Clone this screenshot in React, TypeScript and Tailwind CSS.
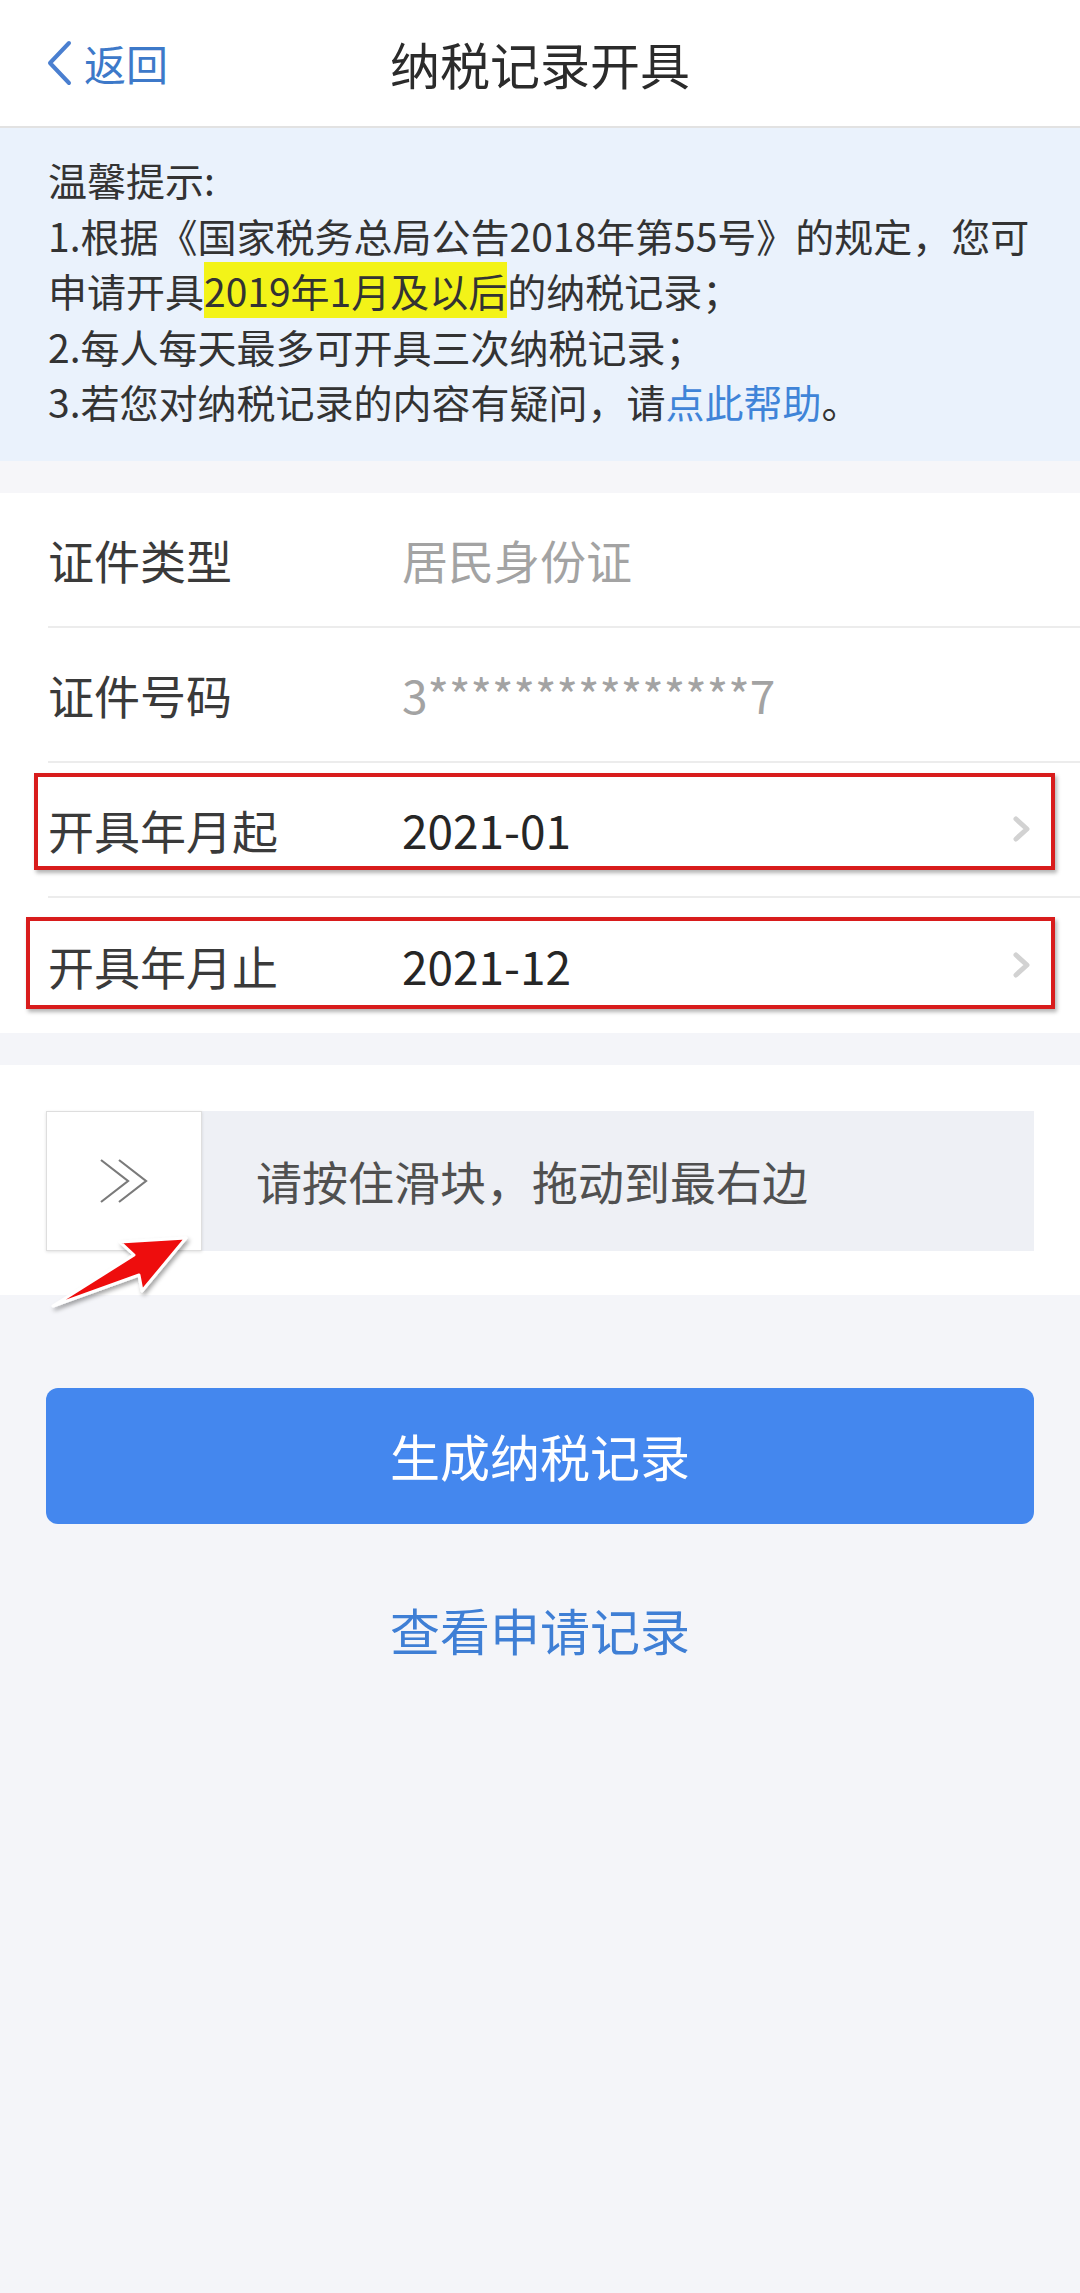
import React from "react"

const font = { fontFamily: '"Noto Sans CJK SC", "Noto Sans", sans-serif' }

function ChevronRight() {
  return (
    <svg width="20" height="26" viewBox="0 0 20 26" className="shrink-0">
      <polyline points="4,3 15,13 4,23" fill="none" stroke="#d2d2d2" strokeWidth="5" strokeLinejoin="round" strokeLinecap="round" />
    </svg>
  )
}

interface RowProps {
  label: string
  value: string
  muted?: boolean
  arrow?: boolean
  last?: boolean
  mark?: string
}

function Row({ label, value, muted, arrow, last, mark }: RowProps) {
  return (
    <div className="relative h-[135px] pl-[48px]">
      <div className={`flex h-full items-center pr-[48px] ${last ? "" : "border-b-2 border-[#ececec]"}`}>
        <div className="w-[354px] shrink-0 text-[46px] text-[#3a3a3a]">{label}</div>
        <div className={`flex-1 text-[46px] ${muted ? "text-[#a3a3a3]" : "text-[#262626]"}`}>{value}</div>
        {arrow && <ChevronRight />}
      </div>
      {/* red annotation box */}
      {mark && <div className={`pointer-events-none absolute border-[4px] border-[#d81c1c] shadow-[2px_3px_4px_rgba(0,0,0,0.3)] ${mark}`}></div>}
    </div>
  )
}

export default function App() {
  return (
    <div className="min-h-[2293px] w-[1080px] bg-[#f4f5f9]" style={font}>
      {/* Header */}
      <div className="relative flex h-[128px] items-center justify-center border-b-2 border-[#e2e2e2] bg-white">
        <div className="absolute left-[44px] top-0 flex h-full items-center gap-[10px] text-[#3d79c9]">
          <svg width="30" height="46" viewBox="0 0 30 46">
            <polyline points="25,3 6,23 25,43" fill="none" stroke="#4a7fd0" strokeWidth="4" strokeLinecap="round" strokeLinejoin="round" />
          </svg>
          <span className="text-[42px] leading-none">返回</span>
        </div>
        <h1 className="text-[50px] font-normal text-[#2b2b2b]">纳税记录开具</h1>
      </div>

      {/* Tips */}
      <div className="bg-[#eaf2fc] px-[48px] pb-[31px] pt-[24px] text-[39px] leading-[55.5px] text-[#333]">
        <p>温馨提示:</p>
        <p>
          1.根据《国家税务总局公告2018年第55号》的规定，您可申请开具
          <span className="bg-[#f3f318]">2019年1月及以后</span>
          的纳税记录；
        </p>
        <p>2.每人每天最多可开具三次纳税记录；</p>
        <p>
          3.若您对纳税记录的内容有疑问，请<span className="text-[#3f84d8]">点此帮助</span>。
        </p>
      </div>

      <div className="h-[32px] bg-[#f6f6f9]"></div>

      {/* Form */}
      <div className="bg-white">
        <Row label="证件类型" value="居民身份证" muted />
        <Row label="证件号码" value="3***************7" muted />
        <Row label="开具年月起" value="2021-01" arrow mark="left-[34px] right-[25px] top-[10px] h-[97px]" />
        <Row label="开具年月止" value="2021-12" arrow last mark="left-[26px] right-[25px] top-[19px] h-[92px]" />
      </div>

      <div className="h-[32px] bg-[#f4f5f9]"></div>

      {/* Slider */}
      <div className="relative bg-white px-[46px] pb-[44px] pt-[46px]">
        <div className="flex h-[140px] items-center bg-[#eef0f5]">
          <div className="flex h-[140px] w-[156px] shrink-0 items-center justify-center border border-[#dedede] bg-white shadow-[0_1px_3px_rgba(0,0,0,0.12)]">
            <svg width="52" height="46" viewBox="0 0 52 46">
              <polyline points="3,2 30,23 3,44" fill="none" stroke="#7a7a7a" strokeWidth="2.2" />
              <polyline points="21,2 48,23 21,44" fill="none" stroke="#7a7a7a" strokeWidth="2.2" />
            </svg>
          </div>
          <span className="ml-[54px] text-[46px] text-[#505050]">请按住滑块，拖动到最右边</span>
        </div>

        {/* red arrow annotation */}
        <svg className="pointer-events-none absolute left-[40px] top-[163px]" width="160" height="95" viewBox="0 0 160 95">
          <defs>
            <filter id="sh" x="-20%" y="-20%" width="140%" height="140%">
              <feDropShadow dx="2" dy="3" stdDeviation="2" floodColor="#000" floodOpacity="0.35" />
            </filter>
          </defs>
          <polygon
            points="146,10 80,14 94,27 13,78 99,47 102,63"
            fill="#ee0d0d"
            stroke="#ffffff"
            strokeWidth="3"
            strokeLinejoin="round"
            filter="url(#sh)"
          />
        </svg>
      </div>

      {/* Actions */}
      <div className="px-[46px] pt-[93px]">
        <button className="flex h-[136px] w-full items-center justify-center rounded-[12px] bg-[#4487ee] text-[50px] text-white">
          生成纳税记录
        </button>
        <div className="mt-[68px] text-center text-[50px] text-[#3f7fd5]">查看申请记录</div>
      </div>
    </div>
  )
}
